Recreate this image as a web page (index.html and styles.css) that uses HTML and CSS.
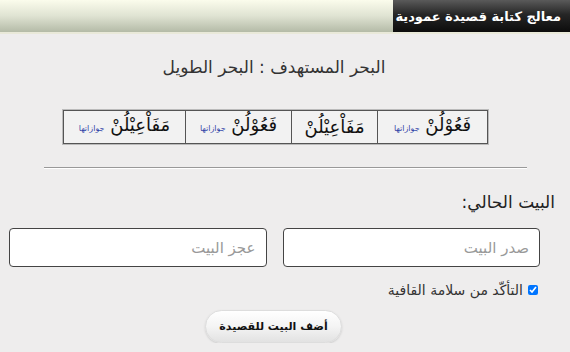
FILE: index.html
```html
<!DOCTYPE html>
<html lang="ar" dir="rtl">
<head>
    <meta charset="UTF-8">
    <title>معالج كتابة قصيدة عمودية</title>
    <link rel="stylesheet" href="styles.css">
</head>
<body>
    <header class="topbar">
        <div class="tab">معالج كتابة قصيدة عمودية</div>
    </header>

    <h2 class="meter-title">البحر المستهدف : البحر الطويل</h2>

    <div class="feet-wrap">
        <table class="feet">
            <tr>
                <td class="c1">فَعُوْلُنْ <a href="#">جوازاتها</a></td>
                <td class="c2">مَفَاْعِيْلُنْ</td>
                <td class="c3">فَعُوْلُنْ <a href="#">جوازاتها</a></td>
                <td class="c4">مَفَاْعِيْلُنْ <a href="#">جوازاتها</a></td>
            </tr>
        </table>
    </div>

    <hr class="sep">

    <h3 class="verse-label">البيت الحالي:</h3>

    <div class="verse-row">
        <input type="text" class="verse-input" placeholder="صدر البيت">
        <input type="text" class="verse-input" placeholder="عجز البيت">
    </div>

    <label class="check-row">
        <input type="checkbox" checked>
        التأكّد من سلامة القافية
    </label>

    <div class="btn-row">
        <button class="add-btn">أضف البيت للقصيدة</button>
    </div>
</body>
</html>
```

FILE: styles.css
```css
body {
    margin: 0;
    padding: 0;
    font-family: "DejaVu Sans", sans-serif;
    background-color: #eeeded;
    color: #333;
}
.topbar {
    height: 32px;
    display: flex;
    background: linear-gradient(#fbfcec, #dfe3d2 50%, #b4bba7);
    border-bottom: 2px solid #e9e9d9;
}
.tab {
    width: 177px;
    height: 32px;
    background: linear-gradient(#5a5a5a, #262626 45%, #0c0c0c);
    color: #fff;
    font-size: 13px;
    font-weight: bold;
    line-height: 34px;
    padding-right: 9px;
    box-sizing: border-box;
}
.meter-title {
    margin: 23px 0 0;
    text-align: center;
    font-size: 17px;
    font-weight: normal;
    color: #333;
    padding-right: 22px;
}
.feet-wrap {
    display: flex;
    padding-right: 82px;
    margin-top: 33px;
}
.feet {
    border-collapse: collapse;
    background: #f2f2f2;
    border: 1px solid #444;
    box-shadow: 0 0 0 1px #bbb;
}
.feet td {
    border: 1px solid #555;
    height: 32px;
    padding: 0;
    text-align: center;
    font-size: 18px;
    line-height: 20px;
    color: #111;
    white-space: nowrap;
}
.feet a {
    font-size: 8px;
    color: #3345a8;
    text-decoration: none;
}
.c1 { width: 109px; }
.c2 { width: 85px; }
.c3 { width: 105px; }
.c4 { width: 121px; }
.sep {
    margin: 23px 43px 0 44px;
    border: none;
    border-top: 1px solid #999;
    border-bottom: 1px solid #fff;
}
.verse-label {
    margin: 23px 15px 0 0;
    font-size: 17px;
    font-weight: normal;
    color: #222;
}
.verse-row {
    display: flex;
    gap: 16px;
    padding: 0 30px 0 9px;
    margin-top: 16px;
}
.verse-input {
    flex: 1;
    height: 39px;
    box-sizing: border-box;
    border: 1px solid #444;
    border-radius: 4px;
    background: #fff;
    padding: 0 10px;
    font-family: "DejaVu Sans", sans-serif;
    font-size: 15px;
    direction: rtl;
}
.verse-input::placeholder {
    color: #999;
}
.check-row {
    display: flex;
    align-items: center;
    gap: 5px;
    margin: 15px 32px 0 0;
    font-size: 14px;
    color: #333;
}
.check-row input {
    width: 10px;
    height: 10px;
    margin: 0;
}
.btn-row {
    display: flex;
    padding-right: 228px;
    margin-top: 12px;
}
.add-btn {
    width: 137px;
    height: 33px;
    border: 1px solid #ddd;
    border-radius: 17px;
    background: linear-gradient(#fff, #f4f4f4 50%, #e2e2e2);
    box-shadow: 0 1px 2px #ccc;
    font-family: "DejaVu Sans", sans-serif;
    font-size: 11px;
    font-weight: bold;
    color: #111;
}
```
